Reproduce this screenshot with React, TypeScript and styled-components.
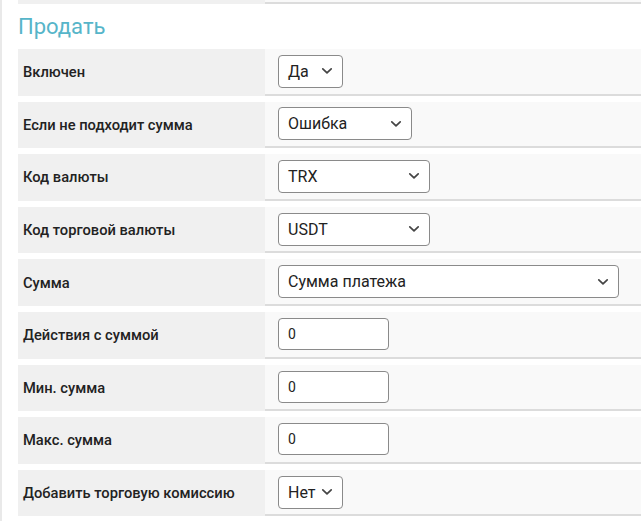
import React from "react";
import styled, { createGlobalStyle } from "styled-components";

const Global = createGlobalStyle`
  html, body { margin: 0; padding: 0; background: #fff; }
  body { font-family: Roboto, "Noto Sans", "Liberation Sans", sans-serif; }
`;

const Page = styled.div`
  border-left: 2px solid #e9e9e9;
  padding-left: 16px;
  height: 521px;
  box-sizing: border-box;
  overflow: hidden;
`;

const Table = styled.div`
  display: grid;
  grid-template-columns: 247px 1fr;
  row-gap: 6px;
`;

const LabelCell = styled.div<{ $h?: number }>`
  background: #f0f0f0;
  height: ${(p) => p.$h ?? 46.6}px;
  display: flex;
  align-items: center;
  padding-left: 5px;
  font-size: 14.7px;
  font-weight: 500;
  color: #222;
`;

const ValueCell = styled.div<{ $h?: number }>`
  background: #f9f9f9;
  height: ${(p) => p.$h ?? 46.6}px;
  box-sizing: border-box;
  border-bottom: 2px solid #dcdcdc;
  display: flex;
  align-items: center;
  padding-left: 13px;
`;

const Title = styled.h2`
  margin: 0;
  height: 45.3px;
  box-sizing: border-box;
  padding-top: 9px;
  font-size: 22px;
  font-weight: 400;
  color: #56b5c9;
  line-height: 28px;
`;

const SelectBox = styled.div<{ $w: number }>`
  width: ${(p) => p.$w}px;
  height: 33px;
  box-sizing: border-box;
  border: 1px solid #8a8a8a;
  border-radius: 4px;
  background: #fff;
  display: flex;
  align-items: center;
  justify-content: space-between;
  padding: 0 9px 0 9px;
  font-size: 16px;
  color: #222;
`;

const InputBox = styled.div`
  width: 111px;
  height: 32px;
  box-sizing: border-box;
  border: 1px solid #8a8a8a;
  border-radius: 4px;
  background: #fff;
  display: flex;
  align-items: center;
  padding-left: 9px;
  font-size: 14px;
  color: #222;
`;

const Chevron = () => (
  <svg width="12" height="8" viewBox="0 0 12 8" fill="none">
    <path d="M1.8 1.8 L6 5.8 L10.2 1.8" stroke="#444" strokeWidth="1.7" strokeLinecap="round" strokeLinejoin="round" />
  </svg>
);

type Row =
  | { label: string; kind: "select"; value: string; width: number }
  | { label: string; kind: "input"; value: string };

const rows: Row[] = [
  { label: "Включен", kind: "select", value: "Да", width: 65 },
  { label: "Если не подходит сумма", kind: "select", value: "Ошибка", width: 134 },
  { label: "Код валюты", kind: "select", value: "TRX", width: 152 },
  { label: "Код торговой валюты", kind: "select", value: "USDT", width: 152 },
  { label: "Сумма", kind: "select", value: "Сумма платежа", width: 341 },
  { label: "Действия с суммой", kind: "input", value: "0" },
  { label: "Мин. сумма", kind: "input", value: "0" },
  { label: "Макс. сумма", kind: "input", value: "0" },
  { label: "Добавить торговую комиссию", kind: "select", value: "Нет", width: 65 },
];

export default function App() {
  return (
    <>
      <Global />
      <Page>
        <Table>
          <LabelCell $h={3.7} />
          <ValueCell $h={3.7} />
        </Table>
        <Title>Продать</Title>
        <Table>
          {rows.map((r) => (
            <React.Fragment key={r.label}>
              <LabelCell>{r.label}</LabelCell>
              <ValueCell>
                {r.kind === "select" ? (
                  <SelectBox $w={r.width}>
                    <span>{r.value}</span>
                    <Chevron />
                  </SelectBox>
                ) : (
                  <InputBox>{r.value}</InputBox>
                )}
              </ValueCell>
            </React.Fragment>
          ))}
        </Table>
      </Page>
    </>
  );
}
